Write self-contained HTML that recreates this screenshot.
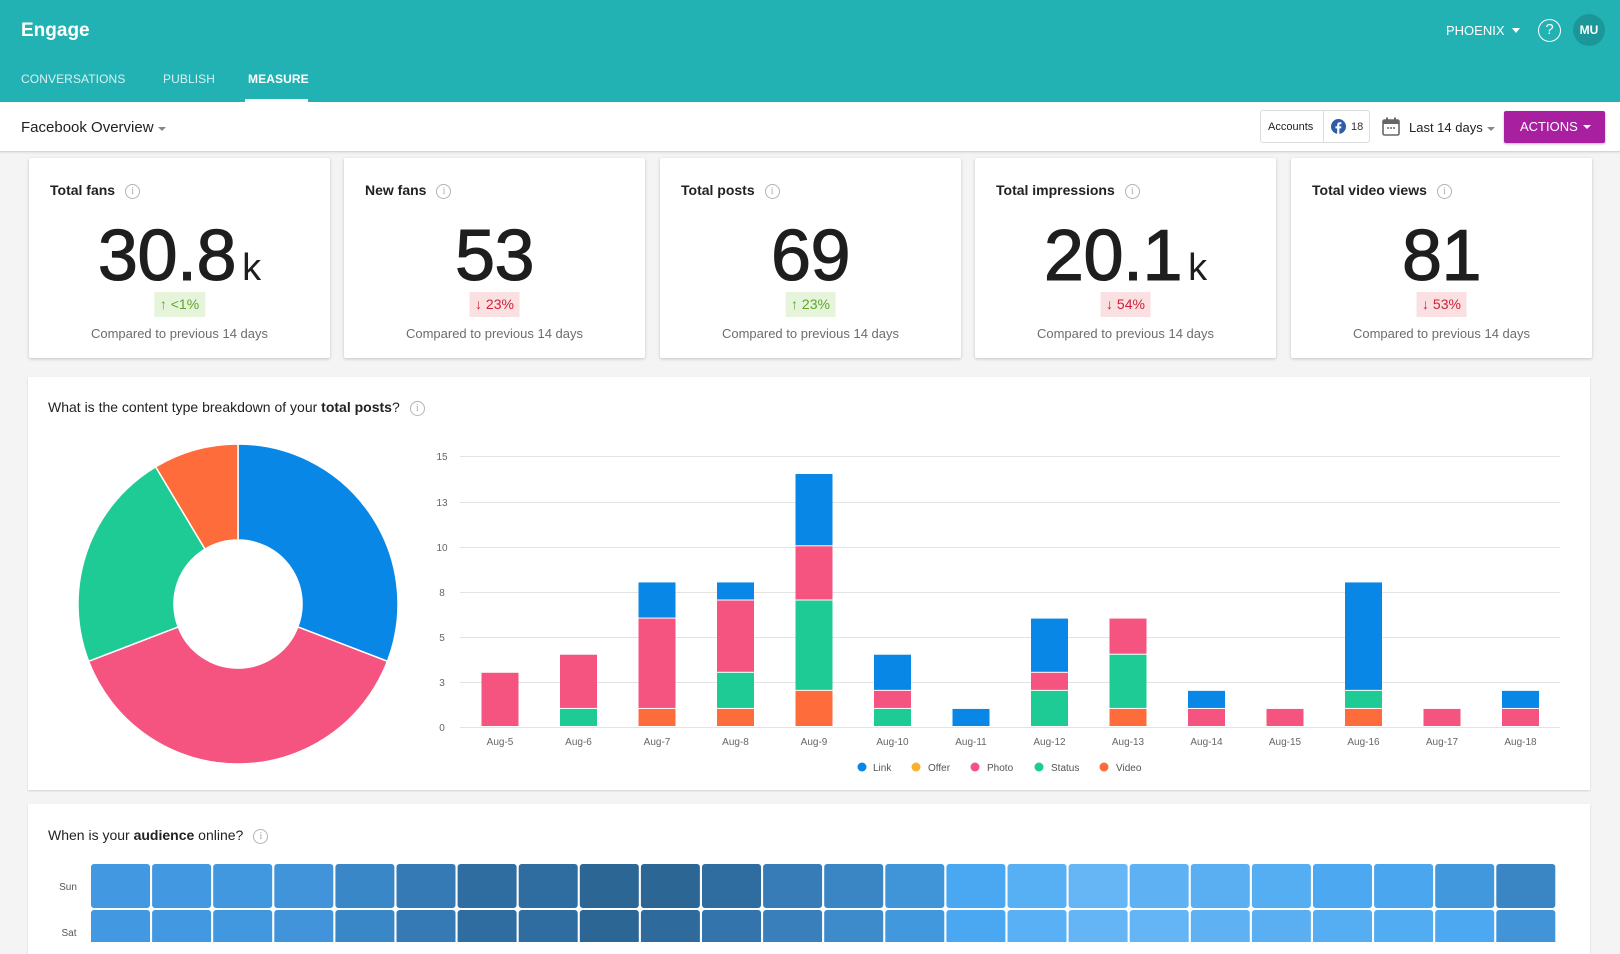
<!DOCTYPE html>
<html><head><meta charset="utf-8"><style>
*{margin:0;padding:0;box-sizing:border-box}
body{width:1620px;height:942px;overflow:hidden;background:#f4f4f4;font-family:"Liberation Sans",Arial,sans-serif;position:relative;color:#222}
.top{position:absolute;left:0;top:0;width:1620px;height:102px;background:#23b2b4}
.abs{position:absolute}
.nav{position:absolute;top:72px;font-size:12px;color:rgba(255,255,255,.82);letter-spacing:.1px}
.sub{position:absolute;left:0;top:102px;width:1620px;height:50px;background:#fff;border-bottom:1px solid #d6d6d6;box-shadow:0 1px 2px rgba(0,0,0,.08)}
.card{position:absolute;top:158px;width:301px;height:200px;background:#fff;box-shadow:0 1px 3px rgba(0,0,0,.2);border-radius:2px;text-align:center}
.card .t{position:absolute;left:21px;top:24px;font-size:14px;font-weight:bold;color:#222;text-align:left;white-space:nowrap}
.info{display:inline-block;width:15px;height:15px;border:1.3px solid #b3b3b3;border-radius:50%;font-size:10px;line-height:13px;text-align:center;color:#aaa;font-weight:normal;vertical-align:middle;margin-left:10px;font-family:"Liberation Serif",serif}
.card .n{position:absolute;left:0;right:0;top:58px;font-size:72px;line-height:80px;color:#1e1e1e;letter-spacing:-0.5px;-webkit-text-stroke:1.1px #1e1e1e}
.card .n small{font-size:38px;letter-spacing:0;margin-left:6px;-webkit-text-stroke:0}
.badge{position:absolute;top:134px;height:25px;line-height:25px;font-size:14px;padding:0 6px;left:50%;transform:translateX(-50%)}
.up{background:#e6f4dc;color:#5ba82a}
.dn{background:#fbe0e2;color:#d0203a}
.card .c{position:absolute;left:0;right:0;top:168px;font-size:13px;color:#6d6d6d}
.panel{position:absolute;left:28px;width:1562px;background:#fff;box-shadow:0 1px 2px rgba(0,0,0,.15)}
</style></head><body>
<div class="top"></div>
<div class="abs" style="left:21px;top:20px;font-size:19px;font-weight:bold;color:#fff">Engage</div>
<div class="nav" style="left:21px">CONVERSATIONS</div>
<div class="nav" style="left:163px">PUBLISH</div>
<div class="nav" style="left:248px;color:#fff;font-weight:bold">MEASURE</div>
<div class="abs" style="left:245px;top:99px;width:63px;height:3px;background:#fff"></div>
<div class="abs" style="left:1446px;top:23px;font-size:13px;color:#fff">PHOENIX</div>
<div class="abs" style="left:1512px;top:28px;border-left:4px solid transparent;border-right:4px solid transparent;border-top:5px solid #fff"></div>
<div class="abs" style="left:1538px;top:19px;width:23px;height:23px;border:1.5px solid #fff;border-radius:50%;color:#fff;font-size:15px;text-align:center;line-height:20px">?</div>
<div class="abs" style="left:1573px;top:14px;width:32px;height:32px;border-radius:50%;background:#1c9799;color:#fff;font-size:12px;font-weight:bold;text-align:center;line-height:32px">MU</div>

<div class="sub"></div>
<div class="abs" style="left:21px;top:119px;font-size:15px;color:#222">Facebook Overview</div>
<div class="abs" style="left:158px;top:127px;border-left:4px solid transparent;border-right:4px solid transparent;border-top:4px solid #888"></div>
<div class="abs" style="left:1260px;top:110px;width:110px;height:33px;border:1px solid #ddd;border-radius:3px;background:#fff"></div>
<div class="abs" style="left:1323px;top:111px;width:1px;height:31px;background:#ddd"></div>
<div class="abs" style="left:1268px;top:121px;font-size:11px;color:#222">Accounts</div>
<svg class="abs" style="left:1331px;top:119px" width="15" height="15" viewBox="0 0 16 16"><circle cx="8" cy="8" r="8" fill="#2f5ba8"/><path d="M8.9 16V10h1.9l.3-2.2H8.9V6.5c0-.6.2-1 1-1h1.2V3.5c-.2 0-.9-.1-1.7-.1-1.7 0-2.8 1-2.8 2.9v1.5H4.7V10h1.9v6z" fill="#fff"/></svg>
<div class="abs" style="left:1351px;top:121px;font-size:11px;color:#333">18</div>
<svg class="abs" style="left:1382px;top:117px" width="18" height="19" viewBox="0 0 18 19"><rect x="1" y="3" width="16" height="15" rx="1.5" fill="none" stroke="#666" stroke-width="1.6"/><rect x="1" y="3" width="16" height="4" fill="#666"/><rect x="4" y="0.5" width="2" height="4" fill="#666"/><rect x="12" y="0.5" width="2" height="4" fill="#666"/><circle cx="6" cy="11" r="1" fill="#666"/><circle cx="9" cy="11" r="1" fill="#666"/><circle cx="12" cy="11" r="1" fill="#666"/></svg>
<div class="abs" style="left:1409px;top:120px;font-size:13px;color:#222">Last 14 days</div>
<div class="abs" style="left:1487px;top:127px;border-left:4px solid transparent;border-right:4px solid transparent;border-top:4px solid #888"></div>
<div class="abs" style="left:1504px;top:111px;width:101px;height:32px;background:#a8209f;border-radius:2px;box-shadow:0 1px 2px rgba(0,0,0,.3);color:#fff;font-size:13px;line-height:32px;padding-left:16px">ACTIONS</div>
<div class="abs" style="left:1583px;top:125px;border-left:4px solid transparent;border-right:4px solid transparent;border-top:4px solid #fff"></div>

<div class="card" style="left:29px"><div class="t">Total fans<span class="info">i</span></div><div class="n">30.8<small>k</small></div><div class="badge up">↑ &lt;1%</div><div class="c">Compared to previous 14 days</div></div>
<div class="card" style="left:344px"><div class="t">New fans<span class="info">i</span></div><div class="n">53</div><div class="badge dn">↓ 23%</div><div class="c">Compared to previous 14 days</div></div>
<div class="card" style="left:660px"><div class="t">Total posts<span class="info">i</span></div><div class="n">69</div><div class="badge up">↑ 23%</div><div class="c">Compared to previous 14 days</div></div>
<div class="card" style="left:975px"><div class="t">Total impressions<span class="info">i</span></div><div class="n">20.1<small>k</small></div><div class="badge dn">↓ 54%</div><div class="c">Compared to previous 14 days</div></div>
<div class="card" style="left:1291px"><div class="t">Total video views<span class="info">i</span></div><div class="n">81</div><div class="badge dn">↓ 53%</div><div class="c">Compared to previous 14 days</div></div>

<div class="panel" style="top:377px;height:413px"></div>
<div class="abs" style="left:48px;top:399px;font-size:14px;color:#222">What is the content type breakdown of your <b>total posts</b>?<span class="info">i</span></div>
<div class="panel" style="top:804px;height:150px"></div>
<div class="abs" style="left:48px;top:827px;font-size:14px;color:#222">When is your <b>audience</b> online?<span class="info">i</span></div>

<svg class="abs" style="left:0;top:0" width="1620" height="942" font-family="Liberation Sans, Arial, sans-serif">
<g stroke="#fff" stroke-width="1.5">
<path d="M238,444 A160,160 0 0 1 387.4,661.3 L297.8,626.9 A64,64 0 0 0 238,540 Z" fill="#0887e6"/>
<path d="M387.4,661.3 A160,160 0 0 1 88.6,661.3 L178.2,626.9 A64,64 0 0 0 297.8,626.9 Z" fill="#f4547f"/>
<path d="M88.6,661.3 A160,160 0 0 1 155.6,466.8 L205,549.1 A64,64 0 0 0 178.2,626.9 Z" fill="#1ecb95"/>
<path d="M155.6,466.8 A160,160 0 0 1 238,444 L238,540 A64,64 0 0 0 205,549.1 Z" fill="#ff6c3c"/>
</g>
<g stroke="#e3e3e3" stroke-width="1">
<line x1="460" x2="1560" y1="456.5" y2="456.5"/><line x1="460" x2="1560" y1="502.5" y2="502.5"/><line x1="460" x2="1560" y1="547.5" y2="547.5"/><line x1="460" x2="1560" y1="592.5" y2="592.5"/><line x1="460" x2="1560" y1="637.5" y2="637.5"/><line x1="460" x2="1560" y1="682.5" y2="682.5"/><line x1="460" x2="1560" y1="727.5" y2="727.5"/>
</g>
<g font-size="10" fill="#666" text-anchor="middle">
<text x="442" y="460">15</text><text x="442" y="506">13</text><text x="442" y="551">10</text><text x="442" y="596">8</text><text x="442" y="641">5</text><text x="442" y="686">3</text><text x="442" y="731">0</text>
</g>
<g id="bars"></g>
<g font-size="10" fill="#666" text-anchor="middle" id="xl"></g>
<g font-size="10" fill="#555">
<circle cx="862" cy="767" r="4.5" fill="#0887e6"/><text x="873" y="771">Link</text>
<circle cx="916" cy="767" r="4.5" fill="#f7b12f"/><text x="928" y="771">Offer</text>
<circle cx="975" cy="767" r="4.5" fill="#f4547f"/><text x="987" y="771">Photo</text>
<circle cx="1039" cy="767" r="4.5" fill="#1ecb95"/><text x="1051" y="771">Status</text>
<circle cx="1104" cy="767" r="4.5" fill="#ff6c3c"/><text x="1116" y="771">Video</text>
</g>
<g font-size="10" fill="#555" text-anchor="middle"><text x="68" y="890">Sun</text><text x="69" y="936">Sat</text></g>
<g id="heat"></g>
</svg>
<script>
var ns="http://www.w3.org/2000/svg";
var data=[[0,0,3,0],[0,1,3,0],[1,0,5,2],[1,2,4,1],[2,5,3,4],[0,1,1,2],[0,0,0,1],[0,2,1,3],[1,3,2,0],[0,0,1,1],[0,0,1,0],[1,1,0,6],[0,0,1,0],[0,0,1,1]];
var cols=["#ff6c3c","#1ecb95","#f4547f","#0887e6"];
var u=18.07,base=727,bars=document.getElementById("bars"),xl=document.getElementById("xl");
data.forEach(function(d,i){var cx=500+i*78.5,y=base;
d.forEach(function(v,j){if(!v)return;var h=v*u;var r=document.createElementNS(ns,"rect");r.setAttribute("x",cx-18.5);r.setAttribute("width",37);r.setAttribute("y",y-h);r.setAttribute("height",h-1);r.setAttribute("fill",cols[j]);bars.appendChild(r);y-=h;});
var t=document.createElementNS(ns,"text");t.setAttribute("x",cx);t.setAttribute("y",745);t.textContent="Aug-"+(5+i);xl.appendChild(t);});
var sun=["#4299e1","#4299e1","#4298df","#4194da","#3a87c8","#3579b5","#2f6ca0","#2f6c9f","#2c6694","#2c6694","#2f6c9f","#377cb7","#3a85c4","#4095d9","#4aa8f2","#58b0f4","#66b6f5","#5eb2f4","#5aaff3","#55adf2","#4ba8f1","#4aa6ef","#4298dc","#3a86c4"];
var sat=["#4299e1","#4299e1","#4298df","#4194da","#3a87c8","#3579b5","#2f6ca0","#2f6c9f","#2c6694","#2e6a9c","#3274ab","#397fbb","#3e8bcc","#4298dc","#4aa8f2","#5ab0f4","#63b5f5","#64b5f5","#5eb2f4","#5aaff3","#55adf2","#52acf2","#4ba8f1","#4294d8"];
var hg=document.getElementById("heat");
[sun,sat].forEach(function(row,ri){row.forEach(function(c,k){var r=document.createElementNS(ns,"rect");r.setAttribute("x",91+k*61.1);r.setAttribute("y",864+ri*46);r.setAttribute("width",59);r.setAttribute("height",44);r.setAttribute("rx",3);r.setAttribute("fill",c);hg.appendChild(r);});});
</script>
</body></html>
